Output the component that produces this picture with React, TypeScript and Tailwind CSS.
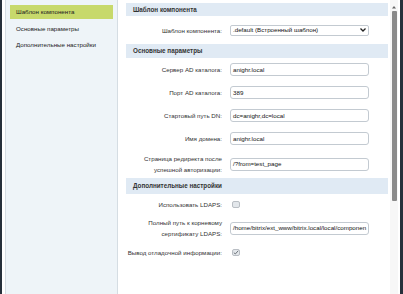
import React from "react";

const font = { fontFamily: "'Liberation Sans', Arial, sans-serif" };

function Header({ children, h }: { children: React.ReactNode; h: string }) {
  return (
    <div className={`${h} bg-[#e0eaf4] flex items-center pl-[7px] text-[6.3px] font-bold text-[#333] shrink-0`}>
      {children}
    </div>
  );
}

function Row({ label, children, h }: { label: React.ReactNode; children: React.ReactNode; h: string }) {
  return (
    <div className={`flex items-center shrink-0 ${h}`}>
      <div className="w-[96px] flex justify-end shrink-0">
        <div className="text-right text-[6.2px] leading-[11px] text-[#333] whitespace-nowrap shrink-0">{label}</div>
      </div>
      <div className="w-[8px] shrink-0" />
      <div className="flex-1">{children}</div>
    </div>
  );
}

function Input({ value }: { value: string }) {
  return (
    <div className="w-[139px] h-[13px] bg-white border border-[#c3cad1] rounded-[3px] flex items-center px-[2px] text-[6.2px] text-[#111] overflow-hidden whitespace-nowrap">
      {value}
    </div>
  );
}

function Check({ checked }: { checked?: boolean }) {
  return (
    <div className="w-[8px] h-[7px] rounded-[2px] border border-[#b9bec4] bg-[#e3e7eb] ml-[2px] flex items-center justify-center">
      {checked && (
        <svg width="6" height="5" viewBox="0 0 6 5">
          <path d="M0.8 2.6 L2.3 4 L5.2 0.8" stroke="#6d737a" strokeWidth="1" fill="none" />
        </svg>
      )}
    </div>
  );
}

export default function App() {
  return (
    <div className="w-[403px] h-[294px] flex bg-white overflow-hidden" style={font}>
      <div className="w-[2px] bg-[#26303b]" />
      <div className="w-[3px] bg-white" />
      <div className="w-[113px] bg-[#eef4f8] border-l border-r border-[#d5dde3] flex flex-col pt-[5px] px-[4px] text-[6.2px] text-[#222]">
        <div className="h-[14px] bg-[#c7d96b] flex items-center pl-[6px]">Шаблон компонента</div>
        <div className="h-[16px] flex items-center pl-[6px] mt-[2px]">Основные параметры</div>
        <div className="h-[16px] flex items-center pl-[6px]">Дополнительные настройки</div>
      </div>
      <div className="w-[8px]" />
      <div className="w-[262px] flex flex-col pt-[3px]">
        <Header h="h-[13px]">Шаблон компонента</Header>
        <Row label="Шаблон компонента:" h="h-[28px]">
          <div className="w-[139px] h-[11px] bg-white border border-[#c3cad1] rounded-[2px] flex items-center justify-between px-[2px] text-[6.2px] text-[#111]">
            <span>.default (Встроенный шаблон)</span>
            <svg width="6" height="4" viewBox="0 0 6 4"><path d="M0.5 0.5 L3 3 L5.5 0.5" stroke="#222" strokeWidth="1.3" fill="none" /></svg>
          </div>
        </Row>
        <Header h="h-[14px]">Основные параметры</Header>
        <Row label="Сервер AD каталога:" h="h-[23px]"><Input value="anighr.local" /></Row>
        <Row label="Порт AD каталога:" h="h-[23px]"><Input value="389" /></Row>
        <Row label="Стартовый путь DN:" h="h-[23px]"><Input value="dc=anighr,dc=local" /></Row>
        <Row label="Имя домена:" h="h-[23px]"><Input value="anighr.local" /></Row>
        <Row label={<>Страница редиректа после<br />успешной авторизации:</>} h="h-[28px]"><Input value="/?from=test_page" /></Row>
        <Header h="h-[16px]">Дополнительные настройки</Header>
        <Row label="Использовать LDAPS:" h="h-[20px]"><Check /></Row>
        <Row label={<>Полный путь к корневому<br />сертификату LDAPS:</>} h="h-[28px]"><Input value="/home/bitrix/ext_www/bitrix.local/local/componen" /></Row>
        <Row label="Вывод отладочной информации:" h="h-[21px]"><Check checked /></Row>
      </div>
      <div className="w-[2px]" />
      <div className="w-[8px] flex flex-col items-center bg-[#f7f7f7]">
        <svg width="6" height="6" viewBox="0 0 6 6" className="mt-[4px]"><path d="M1 4.5 L3 2 L5 4.5 Z" fill="#666" /></svg>
        <div className="w-[5px] h-[190px] bg-[#8a8a8a] rounded-[1px] mt-[1px]" />
      </div>
      <div className="w-[2px] bg-white" />
      <div className="flex-1 bg-[#26303b]" />
    </div>
  );
}
